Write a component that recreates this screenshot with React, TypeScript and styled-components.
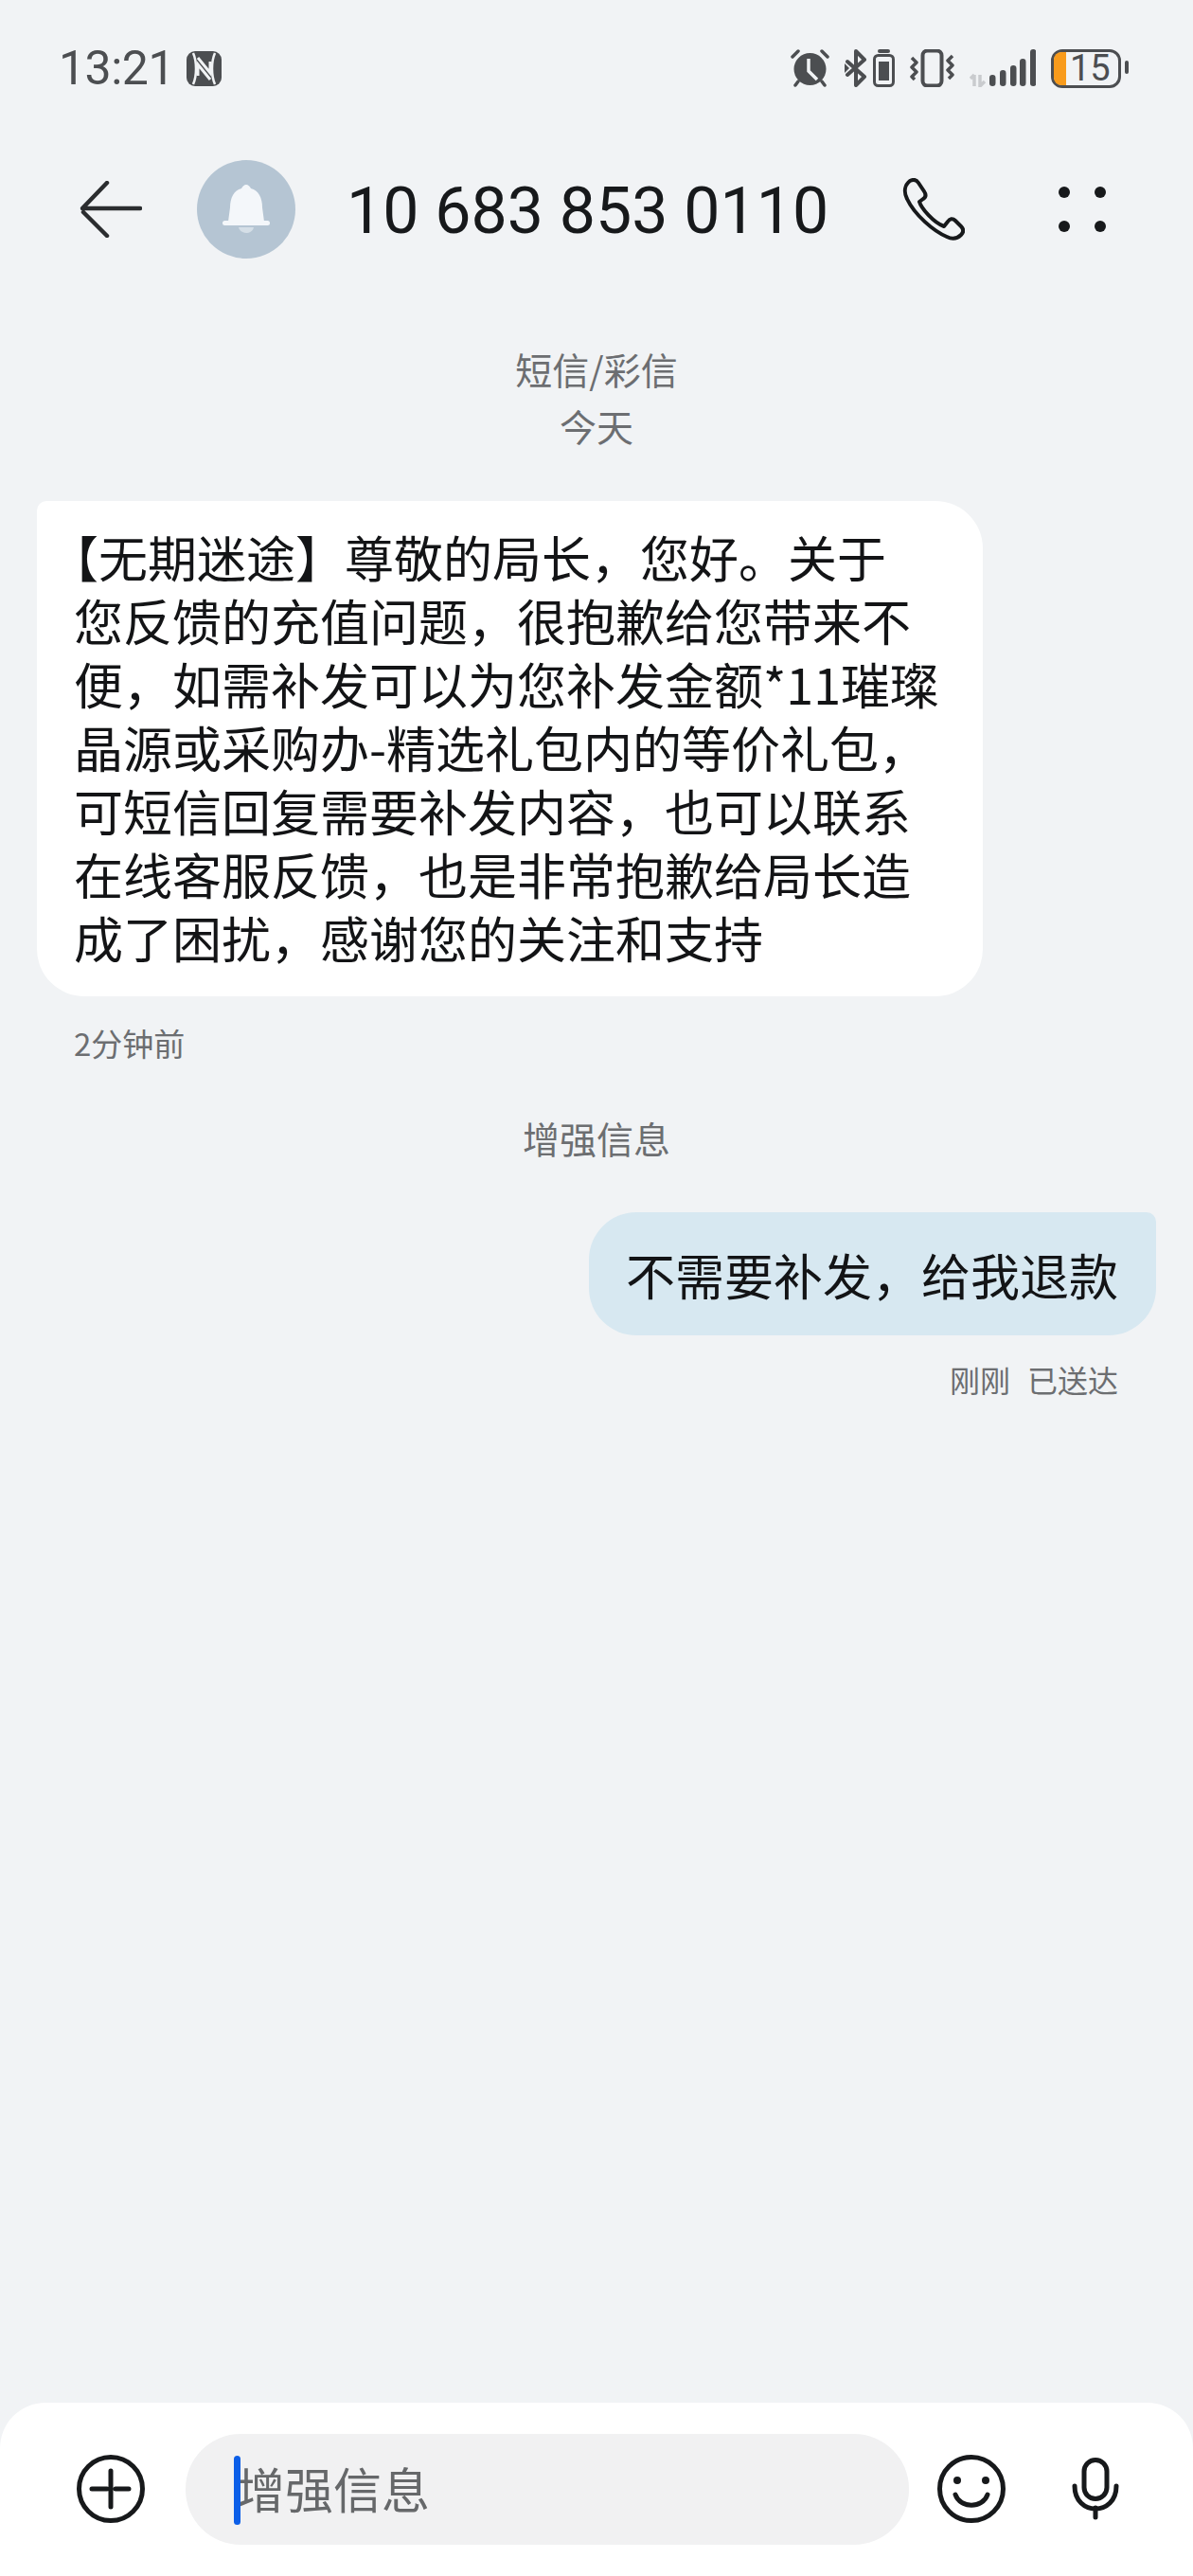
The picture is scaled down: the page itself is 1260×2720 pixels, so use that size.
import React from 'react';
import styled, { createGlobalStyle } from 'styled-components';

const incomingLines = [
  '【无期迷途】尊敬的局长，您好。关于',
  '您反馈的充值问题，很抱歉给您带来不',
  '便，如需补发可以为您补发金额*11璀璨',
  '晶源或采购办-精选礼包内的等价礼包，',
  '可短信回复需要补发内容，也可以联系',
  '在线客服反馈，也是非常抱歉给局长造',
  '成了困扰，感谢您的关注和支持',
];

const signalBars = [
  { x: 21, y: 27, h: 12 },
  { x: 32, y: 22, h: 17 },
  { x: 43, y: 17, h: 22 },
  { x: 53, y: 10, h: 29 },
  { x: 64, y: 0, h: 39 },
];

const App: React.FC = () => {
  return (
    <Page>
      <GlobalStyle />
      <StatusBar>
        <StatusLeft>
          <Clock>13:21</Clock>
          <svg width="37" height="37" viewBox="0 0 37 37">
            <rect width="37" height="37" rx="9" fill="#4c4e51" />
            <path d="M7 2 C11 11 11 26 7 35 M30 2 C26 11 26 26 30 35" stroke="#f1f3f5" strokeWidth="2.500" fill="none" />
            <path d="M12 7 L25 23 L25 11 M25 30 L12 14 L12 26" stroke="#f1f3f5" strokeWidth="3" fill="none" />
          </svg>
        </StatusLeft>
        <StatusRight>
          <svg width="41" height="40" viewBox="0 0 41 40">
            <path d="M2 8 L8 2 M39 8 L33 2" stroke="#4c4e51" strokeWidth="3.500" strokeLinecap="round" />
            <circle cx="20.500" cy="21" r="17" fill="#4c4e51" />
            <path d="M19 10 L19 23 L28 32" stroke="#f1f3f5" strokeWidth="3.500" fill="none" />
            <path d="M8 34 L5 38 M33 34 L36 38" stroke="#4c4e51" strokeWidth="3.500" strokeLinecap="round" />
          </svg>
          <BluetoothGroup>
            <svg width="24" height="40" viewBox="0 0 24 40">
              <path d="M3 13 L21 29 L12 38 L12 2 L21 11 L3 27" stroke="#4c4e51" strokeWidth="4" fill="none" strokeLinejoin="round" strokeLinecap="round" />
              <path d="M0 15 L5 20 L0 25 Z" fill="#4c4e51" />
            </svg>
            <svg width="23" height="40" viewBox="0 0 23 40">
              <rect x="5" y="0" width="13" height="4" rx="2" fill="#4c4e51" />
              <rect x="1.500" y="6.500" width="20" height="32" rx="4" stroke="#4c4e51" strokeWidth="3" fill="none" />
              <rect x="6" y="13" width="11" height="20" fill="#4c4e51" />
            </svg>
          </BluetoothGroup>
          <svg width="47" height="40" viewBox="0 0 47 40">
            <rect x="13.500" y="1.500" width="20" height="37" rx="5" stroke="#4c4e51" strokeWidth="4" fill="none" />
            <path d="M2 9 L7 14 L2 19 L7 24 L2 29 L5 32 M45 7 L40 12 L45 17 L40 22 L45 27 L41 31" stroke="#4c4e51" strokeWidth="3.500" fill="none" strokeLinejoin="round" />
          </svg>
          <svg width="70" height="40" viewBox="0 0 70 40">
            <path d="M5 39 L5 27 M1 31 L5 27 M11 27 L11 39 L16 34" stroke="#c9cbce" strokeWidth="3.500" fill="none" />
            <g fill="#4c4e51">
              {signalBars.map((bar) => (
                <rect key={bar.x} x={bar.x} y={bar.y} width="6.500" height={bar.h} rx="3.200" />
              ))}
            </g>
          </svg>
          <Battery>
            <BatteryFill />
            <BatteryText>15</BatteryText>
            <BatteryNub />
          </Battery>
        </StatusRight>
      </StatusBar>

      <Header>
        <BackButton>
          <svg width="66" height="60" viewBox="0 0 66 60">
            <path d="M64 29 H3 L29 2 M4 33 L29 58" stroke="#2b2d2f" strokeWidth="4.500" fill="none" strokeLinecap="round" strokeLinejoin="round" />
          </svg>
        </BackButton>
        <Avatar>
          <svg width="50" height="53" viewBox="0 0 50 53">
            <path d="M25 0 C27 0 29 2 30 4 C38 6 42 14 42 24 L44 39 H6 L8 24 C8 14 12 6 20 4 C21 2 23 0 25 0 Z" fill="#f4f7fa" />
            <rect x="0" y="38" width="50" height="5" rx="2.500" fill="#f4f7fa" />
            <path d="M17 45 H33 C31 53 19 53 17 45 Z" fill="#d5dfe7" />
          </svg>
        </Avatar>
        <Title>10 683 853 0110</Title>
        <HeaderActions>
          <svg width="66" height="66" viewBox="0 0 66 66">
            <path d="M8 3 C12 1 15 2 17 5 L23 14 C25 17 25 20 22 22 L18 25 C20 32 33 47 44 51 L48 46 C50 43 53 42 56 45 L62 51 C65 54 65 57 62 60 C58 64 53 65 47 62 C33 56 13 39 5 22 C1 14 3 7 8 3 Z" stroke="#17191b" strokeWidth="4" fill="none" strokeLinejoin="round" />
          </svg>
          <MoreGrid>
            <Dot /><Dot /><Dot /><Dot />
          </MoreGrid>
        </HeaderActions>
      </Header>

      <Thread>
        <ChannelLabel>短信/彩信</ChannelLabel>
        <DayLabel>今天</DayLabel>
        <IncomingBubble>
          {incomingLines.map((line) => (
            <BubbleLine key={line}>{line}</BubbleLine>
          ))}
        </IncomingBubble>
        <IncomingTime>2分钟前</IncomingTime>
        <MediumLabel>增强信息</MediumLabel>
        <OutgoingBubble>不需要补发，给我退款</OutgoingBubble>
        <OutgoingMeta>
          <span>刚刚</span>
          <span>已送达</span>
        </OutgoingMeta>
      </Thread>

      <Composer>
        <svg width="72" height="72" viewBox="0 0 72 72">
          <circle cx="36" cy="36" r="33.500" stroke="#17191b" strokeWidth="5" fill="none" />
          <path d="M36 17 V55 M16 36 H32 M41 36 H55" stroke="#17191b" strokeWidth="5" strokeLinecap="round" />
        </svg>
        <InputBox>
          <Caret />
          <Placeholder>增强信息</Placeholder>
        </InputBox>
        <svg width="72" height="72" viewBox="0 0 72 72">
          <circle cx="36" cy="36" r="33.500" stroke="#17191b" strokeWidth="5" fill="none" />
          <circle cx="21" cy="27" r="4" fill="#17191b" />
          <circle cx="51" cy="27" r="4" fill="#17191b" />
          <path d="M19 42 C24 57 48 57 53 42" stroke="#17191b" strokeWidth="5" fill="none" strokeLinecap="round" />
        </svg>
        <MicIcon>
          <svg width="50" height="66" viewBox="0 0 50 66">
            <rect x="13" y="2.500" width="24" height="41" rx="12" stroke="#17191b" strokeWidth="5" fill="none" />
            <path d="M3 30 C3 62 47 62 47 30 M25 53 V63" stroke="#17191b" strokeWidth="5" fill="none" strokeLinecap="round" />
          </svg>
        </MicIcon>
      </Composer>
    </Page>
  );
};

const GlobalStyle = createGlobalStyle`
  html, body {
    margin: 0;
    padding: 0;
  }
  body {
    background: #f1f3f5;
    font-family: 'Noto Sans CJK SC', Roboto, sans-serif;
  }
`;

const Page = styled.div`
  width: 1260px;
  height: 2720px;
  display: flex;
  flex-direction: column;
  background: #f1f3f5;
  overflow: hidden;
`;

const StatusBar = styled.div`
  display: flex;
  justify-content: space-between;
  align-items: center;
  height: 42px;
  margin-top: 51px;
  padding: 0 76px 0 62px;
`;

const StatusLeft = styled.div`
  display: flex;
  align-items: center;
  gap: 13px;
`;

const Clock = styled.span`
  font-family: Roboto, sans-serif;
  font-size: 50px;
  letter-spacing: -0.500px;
  line-height: 42px;
  color: #4c4e51;
`;

const StatusRight = styled.div`
  display: flex;
  align-items: center;
  gap: 16px;
`;

const BluetoothGroup = styled.div`
  display: flex;
  align-items: center;
  gap: 6px;
`;

const Battery = styled.div`
  position: relative;
  width: 74px;
  height: 41px;
  box-sizing: border-box;
  border: 3.500px solid #4c4e51;
  border-radius: 12px;
  display: flex;
  align-items: center;
  padding-left: 17px;
`;

const BatteryFill = styled.div`
  position: absolute;
  left: 0;
  top: 0;
  bottom: 0;
  width: 13px;
  background: #f89b1c;
  border-radius: 8px 0 0 8px;
`;

const BatteryText = styled.span`
  font-family: Roboto, sans-serif;
  font-size: 38px;
  line-height: 34px;
  color: #4c4e51;
`;

const BatteryNub = styled.div`
  position: absolute;
  right: -11px;
  top: 9px;
  width: 4px;
  height: 14px;
  border-radius: 2px;
  background: #4c4e51;
`;

const Header = styled.div`
  display: flex;
  align-items: center;
  height: 104px;
  margin-top: 76px;
  padding-left: 84px;
`;

const BackButton = styled.div`
  display: flex;
  width: 124px;
`;

const Avatar = styled.div`
  width: 104px;
  height: 104px;
  border-radius: 50%;
  background: #b5c5d3;
  display: flex;
  align-items: center;
  justify-content: center;
`;

const Title = styled.div`
  margin-left: 54px;
  padding-top: 4px;
  width: 587px;
  font-family: Roboto, sans-serif;
  font-size: 68px;
  line-height: 104px;
  color: #17191b;
  white-space: nowrap;
`;

const HeaderActions = styled.div`
  display: flex;
  align-items: center;
  gap: 99px;
`;

const MoreGrid = styled.div`
  display: grid;
  grid-template-columns: 12px 12px;
  grid-template-rows: 12px 12px;
  gap: 24px 26px;
`;

const Dot = styled.span`
  border-radius: 50%;
  background: #17191b;
`;

const Thread = styled.div`
  flex: 1;
  display: flex;
  flex-direction: column;
  padding: 0 39px 0;
  margin-top: 88px;
`;

const ChannelLabel = styled.div`
  text-align: center;
  font-size: 39px;
  line-height: 56px;
  color: #6c6e71;
`;

const DayLabel = styled(ChannelLabel)`
  margin-top: 4px;
`;

const IncomingBubble = styled.div`
  align-self: flex-start;
  box-sizing: border-box;
  width: 999px;
  height: 523px;
  margin-top: 52px;
  padding: 25px 0 0 39px;
  background: #fff;
  border-radius: 10px 50px 50px 50px;
`;

const BubbleLine = styled.div`
  font-size: 52px;
  line-height: 67px;
  color: #131416;
  white-space: nowrap;

  &:first-child {
    text-indent: -26px;
  }
`;

const IncomingTime = styled.div`
  margin: 26px 0 0 39px;
  font-size: 33px;
  line-height: 46px;
  color: #6c6e71;
`;

const MediumLabel = styled(ChannelLabel)`
  margin-top: 49px;
`;

const OutgoingBubble = styled.div`
  align-self: flex-end;
  box-sizing: border-box;
  height: 130px;
  margin: 51px 0 0 0;
  padding: 0 40px 0 39px;
  display: flex;
  align-items: center;
  font-size: 52px;
  color: #131416;
  background: #d7e8f1;
  border-radius: 50px 10px 50px 50px;
`;

const OutgoingMeta = styled.div`
  align-self: flex-end;
  display: flex;
  gap: 18px;
  margin: 24px 40px 0 0;
  font-size: 32px;
  line-height: 44px;
  color: #6c6e71;
`;

const Composer = styled.div`
  height: 183px;
  flex-shrink: 0;
  box-sizing: border-box;
  display: flex;
  align-items: flex-start;
  padding: 55px 0 0 81px;
  background: #fff;
  border-radius: 48px 48px 0 0;

  & > svg:first-child {
    margin-right: 43px;
  }
`;

const InputBox = styled.div`
  position: relative;
  box-sizing: border-box;
  width: 764px;
  height: 117px;
  margin: -22px 30px 0 0;
  padding: 0 0 4px 54px;
  display: flex;
  align-items: center;
  background: #f1f1f2;
  border-radius: 58px;
`;

const Caret = styled.span`
  position: absolute;
  left: 51px;
  top: 23px;
  width: 7px;
  height: 73px;
  border-radius: 4px;
  background: #0c5fe8;
`;

const Placeholder = styled.span`
  font-size: 51px;
  color: #66686a;
`;

const MicIcon = styled.div`
  display: flex;
  margin: 3px 0 0 70px;
`;

export default App;
